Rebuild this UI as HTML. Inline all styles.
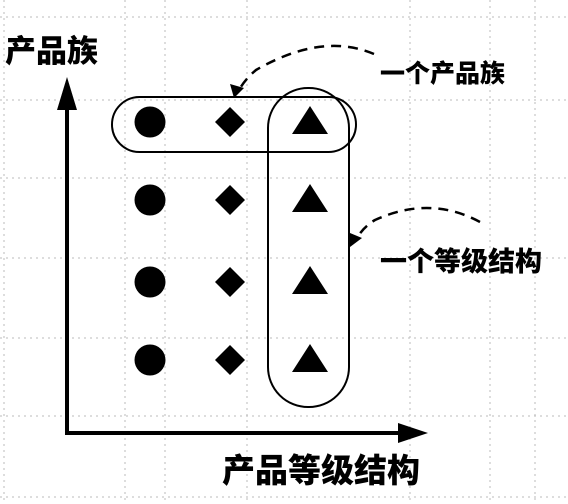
<!DOCTYPE html>
<html><head><meta charset="utf-8"><style>
html,body{margin:0;padding:0;background:#fff;}
svg{display:block}
text{font-family:"Liberation Sans","Noto Sans CJK SC",sans-serif;font-weight:900;fill:#000}
</style></head><body>
<svg width="568" height="504" viewBox="0 0 568 504" xmlns="http://www.w3.org/2000/svg">
<g stroke="#bbb" stroke-width="1" stroke-dasharray="2 4" fill="none">
<line x1="0" y1="17" x2="568" y2="17"/>
<line x1="0" y1="100" x2="568" y2="100"/>
<line x1="0" y1="178" x2="568" y2="178"/>
<line x1="0" y1="258" x2="568" y2="258"/>
<line x1="0" y1="338" x2="568" y2="338"/>
<line x1="0" y1="416" x2="568" y2="416"/>
<line x1="0" y1="497" x2="568" y2="497"/>
<line x1="4" y1="0" x2="4" y2="504"/>
<line x1="125" y1="0" x2="125" y2="504"/>
<line x1="165" y1="0" x2="165" y2="504"/>
<line x1="247" y1="0" x2="247" y2="504"/>
<line x1="410" y1="0" x2="410" y2="504"/>
<line x1="490" y1="0" x2="490" y2="504"/>
<line x1="535" y1="0" x2="535" y2="504"/>
</g>
<text x="5" y="62" font-size="31">产品族</text>
<text x="380" y="82" font-size="25">一个产品族</text>
<text x="380" y="271" font-size="27">一个等级结构</text>
<text x="222" y="482" font-size="33">产品等级结构</text>
<line x1="67" y1="100" x2="67" y2="434" stroke="#000" stroke-width="4"/>
<polygon points="67,77 57,110 77,110" fill="#000"/>
<line x1="65" y1="433" x2="405" y2="433" stroke="#000" stroke-width="4"/>
<polygon points="428,433 398,423 398,443" fill="#000"/>
<rect x="112" y="97" width="244" height="55" rx="27.5" fill="none" stroke="#000" stroke-width="2"/>
<rect x="268" y="88" width="81" height="319" rx="40" fill="none" stroke="#000" stroke-width="2"/>
<g fill="#000">
<circle cx="150" cy="122" r="15.5"/><circle cx="150" cy="200" r="15.5"/><circle cx="150" cy="282" r="15.5"/><circle cx="150" cy="360" r="15.5"/>
<polygon points="230,107 245,122 230,137 215,122"/><polygon points="230,185 245,200 230,215 215,200"/><polygon points="230,267 245,282 230,297 215,282"/><polygon points="230,345 245,360 230,375 215,360"/>
<polygon points="310,106 328,134 292,134"/><polygon points="310,184 328,212 292,212"/><polygon points="310,266 328,294 292,294"/><polygon points="310,344 328,372 292,372"/>
</g>
<path d="M374,54 Q322,32 256,70 Q244,80 238,92" fill="none" stroke="#000" stroke-width="2.5" stroke-dasharray="10 7"/>
<polygon points="234,98 230,84 244,88" fill="#000"/>
<path d="M480,222 Q430,195 375,220 Q362,228 356,240" fill="none" stroke="#000" stroke-width="2.5" stroke-dasharray="10 7"/>
<polygon points="350,247 350,233 362,238" fill="#000"/>
</svg>
</body></html>
